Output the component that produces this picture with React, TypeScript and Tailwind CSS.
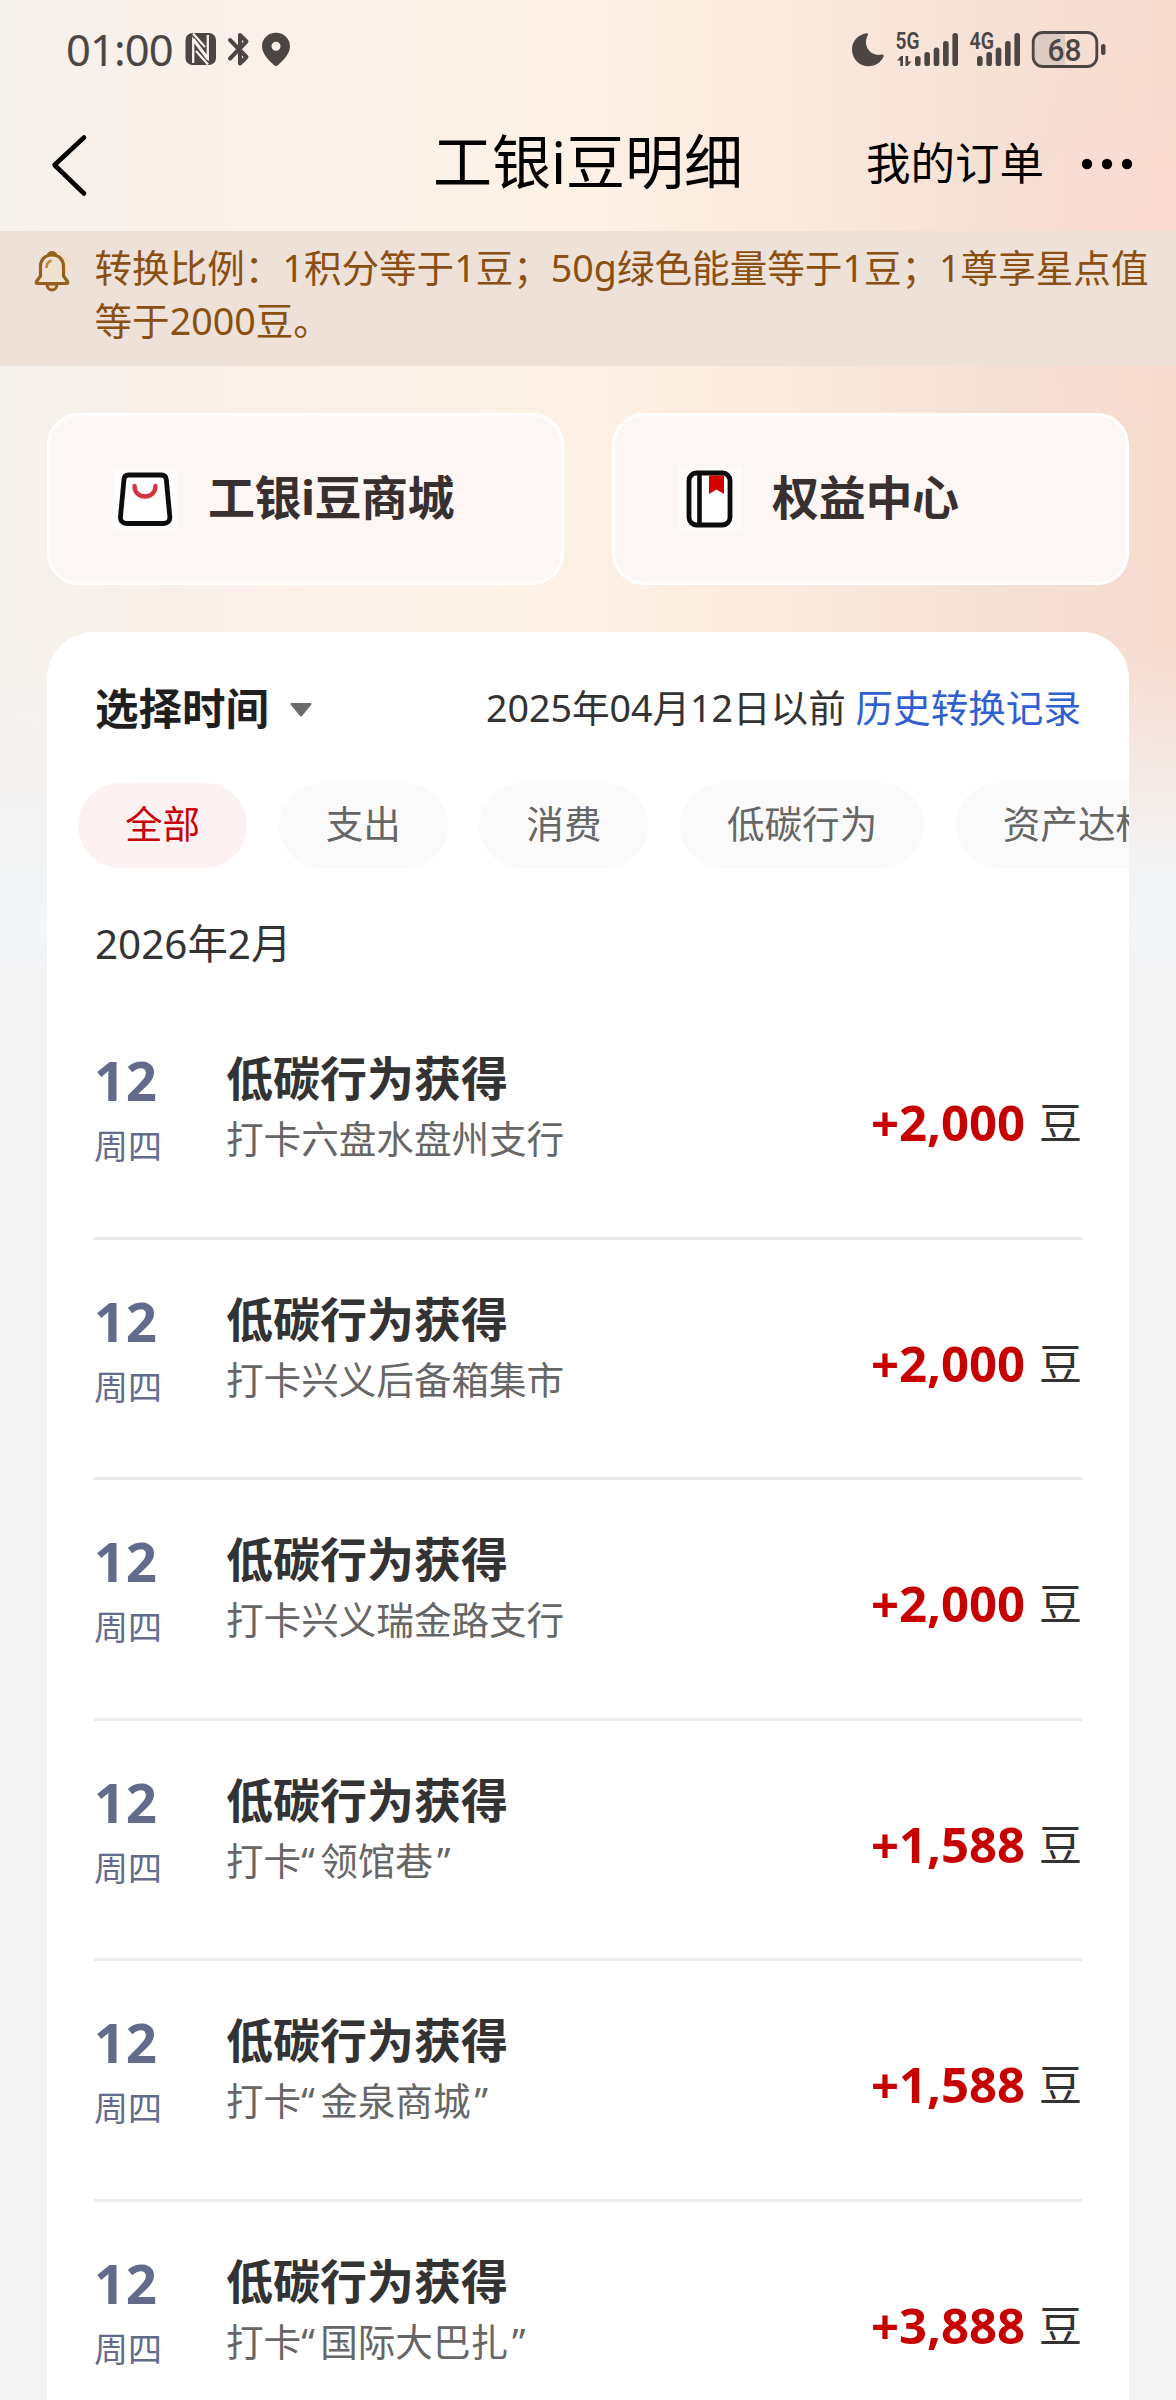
const records = [
  { day: "12", week: "周四", title: "低碳行为获得", place: "六盘水盘州支行", quoted: false, amount: "+2,000" },
  { day: "12", week: "周四", title: "低碳行为获得", place: "兴义后备箱集市", quoted: false, amount: "+2,000" },
  { day: "12", week: "周四", title: "低碳行为获得", place: "兴义瑞金路支行", quoted: false, amount: "+2,000" },
  { day: "12", week: "周四", title: "低碳行为获得", place: "领馆巷", quoted: true, amount: "+1,588" },
  { day: "12", week: "周四", title: "低碳行为获得", place: "金泉商城", quoted: true, amount: "+1,588" },
  { day: "12", week: "周四", title: "低碳行为获得", place: "国际大巴扎", quoted: true, amount: "+3,888" },
];

const filters = ["全部", "支出", "消费", "低碳行为", "资产达标"];

function SignalBars({ x }: { x: number }) {
  const tops = [26, 22, 17.5, 11, 3];
  return (
    <g>
      {tops.map((top, i) => (
        <rect key={top} x={x + i * 9.35} y={top} width="5.6" height={36 - top} rx="2.6" />
      ))}
    </g>
  );
}

function StatusBar() {
  return (
    <div className="flex h-[100px] items-start justify-between pt-[29px] pr-[70px] pl-[66px] text-[#4b4643]">
      <div className="flex h-10 items-center">
        <span className="w-[119px] text-[43.5px] leading-10 tracking-[-0.9px]">01:00</span>
        <svg width="106" height="40" viewBox="0 0 106 40" fill="none">
          {/* NFC */}
          <rect x="0.5" y="4" width="30.5" height="32" rx="7" fill="#4b4643" />
          <path d="M8.2 34V11L23 30.5M22.8 6v23L8.5 10" stroke="#f8f0ea" strokeWidth="2.3" />
          <path d="M8 4.5 20 18M11 22 23 35.5" stroke="#f8f0ea" strokeWidth="2.2" />
          {/* Bluetooth */}
          <path
            d="M45 11 61.5 28 55 34.500V23M45 29.500 61.500 12.500 55 6v11"
            stroke="#4b4643"
            strokeWidth="4"
            strokeLinecap="round"
            strokeLinejoin="round"
          />
          {/* Location */}
          <path
            fillRule="evenodd"
            d="M91 3.8C83 3.8 77 9.7 77 17.3c0 8.7 8.5 15.2 11.5 18.4 1.500 1.600 3.500 1.600 5 0C96.500 32.500 105 26 105 17.300 105 9.700 99 3.800 91 3.800Zm0 9a4.500 4.500 0 1 1 0 9 4.500 4.500 0 0 1 0-9Z"
            fill="#4b4643"
          />
        </svg>
      </div>

      <svg className="-mt-[7px] font-[Roboto]" width="255" height="56" viewBox="0 -8 255 56" fill="#4b4643">
        <path d="M15.500 3.200C7 4.500 1 11 1 19.500 1 29 8.500 36.300 17.500 36.300c7 0 12.500-4 15-9.500.6-1.700-.4-2.600-2-2.200-8.500 2-15.500-4.600-15.500-12 0-2.800.5-4.800 1.800-7.300.7-1.500.1-2.300-1.300-2.100Z" />
        <text x="44.500" y="19.200" fontSize="23" fontWeight="600" textLength="24" lengthAdjust="spacingAndGlyphs">
          5G
        </text>
        <path d="m46 30.500 4-4.500h2v10h-2.700v-5.500Zm8.500-4.500h2.700v5.500h3.300l-4 4.500h-2Z" />
        <SignalBars x={64} />
        <text x="118.500" y="19.200" fontSize="23" fontWeight="600" textLength="24.500" lengthAdjust="spacingAndGlyphs">
          4G
        </text>
        <SignalBars x={126} />
        <path d="M191 2.500h23v34.500h-23a9 9 0 0 1-9-9v-16.500a9 9 0 0 1 9-9Z" fill="#dccbc2" />
        <rect x="182.200" y="2.500" width="63.600" height="34" rx="9.500" fill="none" stroke="#4b4643" strokeWidth="2.800" />
        <rect x="250" y="14" width="4.500" height="11" rx="2.200" />
        <text x="196.500" y="31" fontSize="32" fontWeight="500" textLength="34" lengthAdjust="spacingAndGlyphs">
          68
        </text>
      </svg>
    </div>
  );
}

function Header() {
  return (
    <header className="grid h-[131px] grid-cols-[1fr_auto_1fr] items-start pt-[31px] text-black">
      <svg className="mt-[2px] ml-12" width="44" height="64" viewBox="0 0 44 64" fill="none">
        <path d="M36 4.500 6.500 32 36 60.500" stroke="currentColor" strokeWidth="4.600" strokeLinecap="round" strokeLinejoin="round" />
      </svg>
      <h1 className="text-[59px] leading-[60px]">工银i豆明细</h1>
      <div className="flex items-center justify-end pr-[43px]">
        <span className="text-[44.5px] leading-[64px]">我的订单</span>
        <svg className="mt-[2px] ml-[37px]" width="52" height="14" viewBox="0 0 52 14" fill="currentColor">
          <circle cx="6" cy="7" r="5.200" />
          <circle cx="26" cy="7" r="5.200" />
          <circle cx="46" cy="7" r="5.200" />
        </svg>
      </div>
    </header>
  );
}

function Notice() {
  return (
    <div className="flex h-[135px] items-start bg-[#ede1d8] pt-[11px] pl-8 text-[#8a4f12]">
      <svg className="mt-[6px] shrink-0" width="42" height="46" viewBox="0 0 42 46" fill="none">
        <circle cx="26" cy="16" r="13" fill="#f5dcb8" opacity="0.6" />
        <path d="M14.500 7.500c1-6 10-6 11 0Z" fill="#93601f" />
        <path d="M15 36c0 8 10 8 10 0Z" fill="#ecd9c0" stroke="#93601f" strokeWidth="3" strokeLinejoin="round" />
        <path
          d="M20 7C12.500 7 8.500 12 8.500 18.500V28L4.500 33.500c-.7 1.200-.2 2 1 2h29c1.200 0 1.700-.8 1-2L31.500 28v-9.500C31.500 12 27.500 7 20 7Z"
          fill="#f0e2d2"
          stroke="#93601f"
          strokeWidth="3.200"
          strokeLinejoin="round"
        />
        <path d="M14.500 19c.2-3 1.500-5 4-6" stroke="#b98444" strokeWidth="2.600" strokeLinecap="round" />
      </svg>
      <p className="ml-[20.500px] text-[37.600px] leading-[52.700px] whitespace-nowrap">
        转换比例：1积分等于1豆；50g绿色能量等于1豆；1尊享星点值
        <br />
        等于2000豆。
      </p>
    </div>
  );
}

function Shortcuts() {
  const card =
    "flex h-[172px] flex-1 items-center rounded-[32px] border-[3px] border-white bg-[#fcf7f4] pl-[63px] text-[47px] font-bold text-[#383030]";
  return (
    <div className="flex gap-12 px-[47px] pt-[47px]">
      <div className={card}>
        <svg width="64" height="64" viewBox="0 0 64 64" fill="none">
          <path d="M0 0h64v64H0Z" fill="#fefcfb" />
          <path
            d="M15.500 8h33c3 0 4.500 2 4.800 4.500l3.500 37c.4 4-2 7-6 7H13.500c-4 0-6.400-3-6-7l3.500-37C11.200 10 12.500 8 15.500 8Z"
            stroke="#0c0c0c"
            strokeWidth="4.800"
            fill="#fff"
          />
          <path d="M21.500 19c0 14 21 14 21 0" stroke="#d4343f" strokeWidth="4.400" strokeLinecap="round" />
        </svg>
        <span className="-mt-[4px] ml-[31px] tracking-[-0.5px]">工银i豆商城</span>
      </div>
      <div className={card}>
        <svg width="64" height="64" viewBox="0 0 64 64" fill="none">
          <path d="M0 0h64v64H0Z" fill="#fefcfb" />
          <rect x="11" y="6" width="41" height="52" rx="7.500" stroke="#0c0c0c" strokeWidth="4.800" fill="#fff" />
          <path d="M21.500 6v52" stroke="#0c0c0c" strokeWidth="4.600" />
          <path d="M31 8.500H46V27l-7.500-4.500L31 27Z" fill="#d30000" />
        </svg>
        <span className="-mt-[4px] ml-[30px] tracking-[-0.3px]">权益中心</span>
      </div>
    </div>
  );
}

function Record({ record }: { record: (typeof records)[number] }) {
  return (
    <li className="flex h-[240.6px] border-b-3 border-[#ebebeb] pt-[51px]">
      <div className="w-[132px] text-[#626b8c]">
        <div className="text-[54.5px] leading-[60px] font-bold tracking-[0.6px]">{record.day}</div>
        <div className="mt-[11px] text-[34px] leading-[50px]">{record.week}</div>
      </div>
      <div className="flex-1">
        <div className="text-[47px] leading-[56px] font-bold text-[#333]">{record.title}</div>
        <div className="mt-[8px] text-[37.6px] leading-[50px] text-[#666]">
          打卡
          {record.quoted ? (
            <>
              <span className="inline-block w-[19px]">“</span>
              {record.place}
              <span className="ml-[4px]">”</span>
            </>
          ) : (
            record.place
          )}
        </div>
      </div>
      <div className="flex items-baseline self-start pt-[42px] leading-[60px]">
        <span className="text-[49px] font-bold text-[#c70000]">{record.amount}</span>
        <span className="relative -top-[2px] ml-[14px] text-[43px] text-[#333]">豆</span>
      </div>
    </li>
  );
}

export default function App() {
  return (
    <div className="h-[2400px] w-[1176px] overflow-hidden bg-[#f3f3f3] font-['Noto_Sans','Noto_Sans_CJK_SC',sans-serif]">
      <div className="bg-[linear-gradient(to_bottom,transparent_0,transparent_640px,#f2f3f4_870px,#f3f5f8_925px,#f3f3f3_990px),radial-gradient(circle_at_1176px_230px,#fbdcd2_0,transparent_200px),linear-gradient(to_right,#f5f1ec_0,#f9f0ea_140px,#fbf1e9_320px,#fdf1e5_560px,#fbe9dd_800px,#f6e1d5_980px,#f7dbcf_1176px)]">
        <StatusBar />
        <Header />
        <Notice />
        <Shortcuts />

        <main className="mx-[47px] mt-[47px] h-[1768px] overflow-hidden rounded-t-[47px] bg-white">
          <div className="flex items-center justify-between px-12 pt-[46px]">
            <button type="button" className="flex items-center text-[43.5px] leading-[60px] font-bold text-[#1f1f1f]">
              选择时间
              <svg className="mt-[3px] ml-[21px]" width="22" height="14" viewBox="0 0 22 14">
                <path d="M1.500 0h19c1 0 1.300 1 .7 1.700L12 13c-.6.700-1.400.7-2 0L.8 1.700C.2 1 .5 0 1.500 0Z" fill="#6b6b6b" />
              </svg>
            </button>
            <div className="text-[37.6px] leading-[60px] text-[#333]">
              2025年04月12日以前 <a className="text-[#2f5fd0]">历史转换记录</a>
            </div>
          </div>

          <div className="mt-[45px] flex gap-[31.5px] pl-[31px]">
            {filters.map((name, i) => (
              <button
                key={name}
                type="button"
                className={`h-[85px] shrink-0 rounded-full px-[47px] pb-[3px] text-[37.6px] leading-[60px] ${
                  i === 0 ? "bg-[#fdf1f2] text-[#c7000b]" : "bg-[#fafafa] text-[#666]"
                }`}
              >
                {name}
              </button>
            ))}
          </div>

          <h2 className="mt-[46px] pl-12 text-[40.4px] leading-[60px] text-[#333]">2026年2月</h2>

          <ul className="mt-[25px] px-[47px]">
            {records.map((record, i) => (
              <Record key={i} record={record} />
            ))}
          </ul>
        </main>
      </div>
    </div>
  );
}
